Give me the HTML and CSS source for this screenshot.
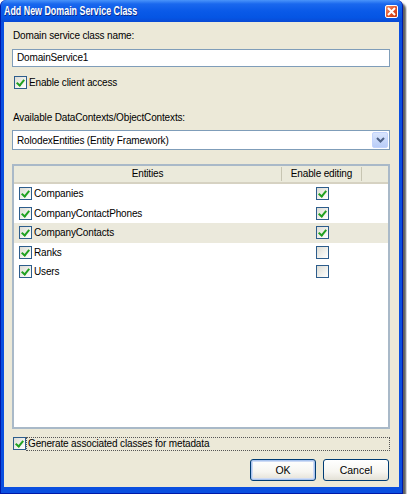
FILE: index.html
```html
<!DOCTYPE html>
<html lang="en">
<head>
  <meta charset="UTF-8" />
  <title>Add New Domain Service Class</title>
  <link rel="stylesheet" href="styles.css">
</head>
<body>
  <div class="window">
    <div class="titlebar">
      <span class="title">Add New Domain Service Class</span>
      <span class="close">
        <svg width="9" height="9" viewBox="0 0 9 9"><path d="M1 1 L8 8 M8 1 L1 8" stroke="#fff" stroke-width="2"/></svg>
      </span>
    </div>

    <div class="client">
      <div class="label first">Domain service class name:</div>
      <div class="textbox">DomainService1</div>

      <label class="check-line client-access">
        <span class="box on"></span>Enable client access
      </label>

      <div class="label second">Available DataContexts/ObjectContexts:</div>
      <div class="combo">
        <span>RolodexEntities (Entity Framework)</span>
        <span class="combo-btn">
          <svg width="9" height="6" viewBox="0 0 9 6"><path d="M1 1 L4.5 4.5 L8 1" stroke="#4d6185" stroke-width="2" fill="none"/></svg>
        </span>
      </div>

      <div class="list">
        <div class="list-head">
          <div class="col-entity">Entities</div>
          <div class="col-edit">Enable editing</div>
          <div class="col-rest"></div>
        </div>
        <div class="row">
          <div class="col-entity"><span class="box on"></span>Companies</div>
          <div class="col-edit"><span class="box on"></span></div>
        </div>
        <div class="row">
          <div class="col-entity"><span class="box on"></span>CompanyContactPhones</div>
          <div class="col-edit"><span class="box on"></span></div>
        </div>
        <div class="row selected">
          <div class="col-entity"><span class="box on"></span>CompanyContacts</div>
          <div class="col-edit"><span class="box on"></span></div>
        </div>
        <div class="row">
          <div class="col-entity"><span class="box on"></span>Ranks</div>
          <div class="col-edit"><span class="box"></span></div>
        </div>
        <div class="row">
          <div class="col-entity"><span class="box on"></span>Users</div>
          <div class="col-edit"><span class="box"></span></div>
        </div>
      </div>

      <label class="check-line metadata">
        <span class="box on"></span><span class="focus">Generate associated classes for metadata</span>
      </label>

      <div class="buttons">
        <button class="btn default">OK</button>
        <button class="btn">Cancel</button>
      </div>
    </div>
  </div>
</body>
</html>
```

FILE: styles.css
```css
* {
  margin: 0;
  padding: 0;
  box-sizing: border-box;
}

body {
  background: #fff;
  font-family: "Liberation Sans", Arial, sans-serif;
  font-size: 10px;
  letter-spacing: -0.15px;
  color: #000;
}

.window {
  width: 403px;
  height: 494px;
  background: #0a4fe0;
  border: 1px solid #0019a8;
  border-top: none;
  border-radius: 6px 6px 0 0;
  box-shadow: 3px 3px 2px rgba(40, 40, 40, 0.75);
  display: flex;
  flex-direction: column;
}

.titlebar {
  height: 22px;
  background: linear-gradient(#4a94fa 0%, #1a68ee 18%, #0a5ae8 50%, #0555e4 80%, #0a4ad4 100%);
  border-radius: 6px 6px 0 0;
  display: flex;
  align-items: center;
  justify-content: space-between;
  padding: 0 4px 0 3px;
}

.title {
  color: #fff;
  font-weight: bold;
  font-size: 12px;
  letter-spacing: 0;
  text-shadow: 1px 1px 0 #0a2a8a;
  transform: scaleX(0.74);
  transform-origin: left center;
  white-space: nowrap;
}

.close {
  width: 13px;
  height: 13px;
  border: 1px solid #fff;
  border-radius: 2px;
  background: linear-gradient(135deg, #f0946c 0%, #e3552d 50%, #c33812 100%);
  display: flex;
  align-items: center;
  justify-content: center;
  margin-top: 1px;
}

.client {
  flex: 1;
  margin: 0 3px 6px 3px;
  background: #ece9d8;
  padding: 7px 9px 0 8px;
  display: flex;
  flex-direction: column;
}

.label {
  height: 13px;
  line-height: 13px;
  padding-left: 1px;
}

.textbox {
  margin-top: 7px;
  height: 18px;
  background: #fff;
  border: 1px solid #7f9db9;
  padding-left: 4px;
  line-height: 16px;
}

.check-line {
  display: flex;
  align-items: center;
  height: 13px;
}

.client-access {
  margin-top: 9px;
  padding-left: 2px;
}

.box {
  width: 13px;
  height: 13px;
  border: 1px solid #2d5d8c;
  background: linear-gradient(135deg, #dcdcd5 0%, #f2f2ee 60%, #fff 100%);
  flex-shrink: 0;
  margin-right: 2px;
  position: relative;
}

.box.on::after {
  content: "";
  position: absolute;
  left: 3px;
  top: 1px;
  width: 3px;
  height: 6px;
  border: solid #21a121;
  border-width: 0 2px 2px 0;
  transform: rotate(40deg);
}

.second {
  margin-top: 22px;
}

.combo {
  margin-top: 6px;
  height: 20px;
  background: #fff;
  border: 1px solid #7f9db9;
  display: flex;
  align-items: center;
  justify-content: space-between;
  padding: 0 1px 0 4px;
}

.combo-btn {
  width: 16px;
  height: 16px;
  border-radius: 2px;
  background: linear-gradient(#d9e5fd, #b9cdf8);
  border: 1px solid #c2d3fc;
  display: flex;
  align-items: center;
  justify-content: center;
}

.list {
  margin-top: 14px;
  height: 265px;
  background: #fff;
  border: 2px solid #a9b9c8;
}

.list-head {
  height: 18px;
  background: #ebeadb;
  border-bottom: 2px solid #d6d2c2;
  display: flex;
  align-items: center;
}

.list-head .col-entity,
.list-head .col-edit {
  border-right: 1px solid #c7c5b2;
  height: 14px;
  line-height: 14px;
  text-align: center;
}

.col-entity {
  width: 268px;
}

.col-edit {
  width: 80px;
}

.row {
  height: 19.5px;
  display: flex;
  align-items: center;
}

.row .col-entity {
  display: flex;
  align-items: center;
  padding-left: 5px;
}

.row .col-edit {
  display: flex;
  justify-content: center;
  padding-left: 1px;
}

.row .col-edit .box {
  margin-right: 0;
}

.row.selected {
  background: #ebe9dc;
}

.metadata {
  margin-top: 8px;
  padding-left: 1px;
}

.metadata .box {
  margin-right: 0;
}

.focus {
  flex: 1;
  height: 14px;
  line-height: 12px;
  border: 1px dotted #555;
  padding-left: 1px;
}

.buttons {
  margin-top: 9px;
  display: flex;
  justify-content: flex-end;
  gap: 7px;
  padding-right: 1px;
}

.btn {
  width: 66px;
  height: 22px;
  font-family: "Liberation Sans", Arial, sans-serif;
  font-size: 10.5px;
  color: #000;
  border: 1px solid #003c74;
  border-radius: 3px;
  background: linear-gradient(#ffffff 0%, #f6f5f0 60%, #e3e1d6 100%);
}

.btn.default {
  box-shadow: inset 0 0 0 1px #a9c4ee, inset 0 0 0 2px #cedbf5;
}
```
